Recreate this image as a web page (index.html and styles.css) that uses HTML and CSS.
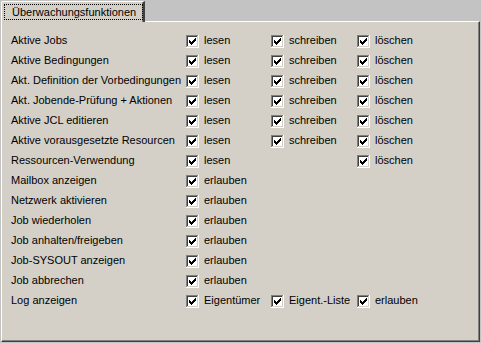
FILE: index.html
```html
<!DOCTYPE HTML>
<html lang="de">
<head>
    <meta charset="utf-8">
    <title>Überwachungsfunktionen</title>
    <link rel="stylesheet" href="styles.css">
</head>
<body>
<svg class="defs" width="0" height="0">
    <symbol id="cb" viewBox="0 0 13 13">
        <rect width="13" height="13" fill="#fff"/>
        <path d="M0 0h12v1H1v11H0z" fill="#808080"/>
        <rect x="1" y="1" width="11" height="11" fill="#d4d0c8"/>
        <path d="M1 1h10v1H2v9H1z" fill="#404040"/>
        <rect x="2" y="2" width="9" height="9" fill="#fff"/>
        <path d="M3 5h1v3H3zM4 6h1v3H4zM5 7h1v3H5zM6 6h1v3H6zM7 5h1v3H7zM8 4h1v3H8zM9 3h1v3H9z" fill="#000"/>
    </symbol>
</svg>
<div class="tabbar">
    <div class="tab"><span class="tab-label">Überwachungsfunktionen</span></div>
</div>
<div class="panel">
    <div class="grid">
        <!-- Aktive Objekte: lesen / schreiben / löschen -->
        <div class="name">Aktive Jobs</div>
        <div class="opt"><svg class="cb"><use href="#cb"/></svg>lesen</div>
        <div class="opt"><svg class="cb"><use href="#cb"/></svg>schreiben</div>
        <div class="opt"><svg class="cb"><use href="#cb"/></svg>löschen</div>

        <div class="name">Aktive Bedingungen</div>
        <div class="opt"><svg class="cb"><use href="#cb"/></svg>lesen</div>
        <div class="opt"><svg class="cb"><use href="#cb"/></svg>schreiben</div>
        <div class="opt"><svg class="cb"><use href="#cb"/></svg>löschen</div>

        <div class="name">Akt. Definition der Vorbedingungen</div>
        <div class="opt"><svg class="cb"><use href="#cb"/></svg>lesen</div>
        <div class="opt"><svg class="cb"><use href="#cb"/></svg>schreiben</div>
        <div class="opt"><svg class="cb"><use href="#cb"/></svg>löschen</div>

        <div class="name">Akt. Jobende-Prüfung + Aktionen</div>
        <div class="opt"><svg class="cb"><use href="#cb"/></svg>lesen</div>
        <div class="opt"><svg class="cb"><use href="#cb"/></svg>schreiben</div>
        <div class="opt"><svg class="cb"><use href="#cb"/></svg>löschen</div>

        <div class="name">Aktive JCL editieren</div>
        <div class="opt"><svg class="cb"><use href="#cb"/></svg>lesen</div>
        <div class="opt"><svg class="cb"><use href="#cb"/></svg>schreiben</div>
        <div class="opt"><svg class="cb"><use href="#cb"/></svg>löschen</div>

        <div class="name">Aktive vorausgesetzte Resourcen</div>
        <div class="opt"><svg class="cb"><use href="#cb"/></svg>lesen</div>
        <div class="opt"><svg class="cb"><use href="#cb"/></svg>schreiben</div>
        <div class="opt"><svg class="cb"><use href="#cb"/></svg>löschen</div>

        <div class="name">Ressourcen-Verwendung</div>
        <div class="opt"><svg class="cb"><use href="#cb"/></svg>lesen</div>
        <div class="opt"></div>
        <div class="opt"><svg class="cb"><use href="#cb"/></svg>löschen</div>

        <!-- Aktionen: erlauben -->
        <div class="name">Mailbox anzeigen</div>
        <div class="opt wide"><svg class="cb"><use href="#cb"/></svg>erlauben</div>

        <div class="name">Netzwerk aktivieren</div>
        <div class="opt wide"><svg class="cb"><use href="#cb"/></svg>erlauben</div>

        <div class="name">Job wiederholen</div>
        <div class="opt wide"><svg class="cb"><use href="#cb"/></svg>erlauben</div>

        <div class="name">Job anhalten/freigeben</div>
        <div class="opt wide"><svg class="cb"><use href="#cb"/></svg>erlauben</div>

        <div class="name">Job-SYSOUT anzeigen</div>
        <div class="opt wide"><svg class="cb"><use href="#cb"/></svg>erlauben</div>

        <div class="name">Job abbrechen</div>
        <div class="opt wide"><svg class="cb"><use href="#cb"/></svg>erlauben</div>

        <div class="name">Log anzeigen</div>
        <div class="opt"><svg class="cb"><use href="#cb"/></svg>Eigentümer</div>
        <div class="opt"><svg class="cb"><use href="#cb"/></svg>Eigent.-Liste</div>
        <div class="opt"><svg class="cb"><use href="#cb"/></svg>erlauben</div>
    </div>
</div>
</body>
</html>
```

FILE: styles.css
```css
html, body{
    margin: 0;
    padding: 0;
}
body{
    background: #c3c3c3;
    font-family: "Liberation Sans", Arial, sans-serif;
    font-size: 11px;
    color: #000;
    width: 481px;
    height: 343px;
    overflow: hidden;
}
.defs{
    position: absolute;
}
.tabbar{
    display: flex;
    padding: 1px 0 0 1px;
}
.tab{
    position: relative;
    z-index: 1;
    width: 144px;
    box-sizing: border-box;
    margin-bottom: -1px;
    padding: 2px 0 2px 2px;
    background: #d4d0c8;
    border-top: 1px solid #fff;
    border-left: 1px solid #fff;
    border-right: 2px solid #404040;
    box-shadow: inset -1px 0 #808080;
    border-top-left-radius: 2px;
}
.tab-label{
    display: block;
    width: 139px;
    height: 16px;
    box-sizing: border-box;
    padding-left: 7px;
    border: 1px dotted #000;
    line-height: 14px;
    white-space: nowrap;
}
.panel{
    width: 479px;
    height: 321px;
    box-sizing: border-box;
    margin-left: 1px;
    padding: 9px 0 0 9px;
    background: #d4d0c8;
    border-top: 1px solid #fff;
    border-left: 1px solid #fff;
    border-right: 1px solid #404040;
    border-bottom: 1px solid #404040;
    box-shadow: inset -1px -1px #808080;
}
.grid{
    display: grid;
    grid-template-columns: 175px 85px 86px auto;
    grid-auto-rows: 20px;
}
.name, .opt{
    line-height: 19px;
    white-space: nowrap;
}
.opt{
    display: flex;
    align-items: flex-start;
}
.wide{
    grid-column: 2 / 5;
}
.cb{
    width: 13px;
    height: 13px;
    flex: none;
    margin: 4px 5px 0 0;
}
```
